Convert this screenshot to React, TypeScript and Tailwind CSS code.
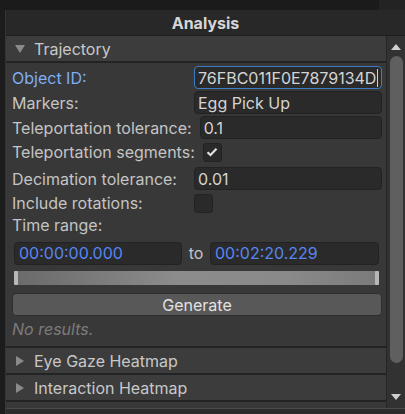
import { useState } from 'react'

const font = { fontFamily: 'Inter, "Noto Sans", sans-serif' }

function Foldout({ label, open }: { label: string; open?: boolean }) {
    return (
        <div className="h-[27px] flex items-center bg-[#3c3c3c] border-b-2 border-[#232323] shrink-0">
            <div className="w-[24px] flex justify-center pl-[3px]">
                {open ? (
                    <svg width="12" height="10" viewBox="0 0 12 10"><path d="M1 1 L11 1 L6 9 Z" fill="#8a8a8a" /></svg>
                ) : (
                    <svg width="10" height="12" viewBox="0 0 10 12"><path d="M1 1 L9 6 L1 11 Z" fill="#8a8a8a" /></svg>
                )}
            </div>
            <span className="text-[16px] text-[#c8c8c8] ml-[4px]">{label}</span>
        </div>
    )
}

function Field({ label, value, focused, mt }: { label: string; value: string; focused?: boolean; mt?: string }) {
    return (
        <div className={"flex items-center h-[23px] " + (mt ?? '')}>
            <div className={"min-w-[174px] text-[16px] whitespace-nowrap " + (focused ? 'text-[#7eaef5]' : 'text-[#c4c4c4]')}>{label}</div>
            <div className={"ml-[8px] flex-1 h-[23px] rounded-[4px] bg-[#2a2a2a] border flex items-center px-[3px] text-[16px] text-[#d4d4d4] whitespace-nowrap " + (focused ? 'border-[#3d7cc4] justify-end' : 'border-[#222222]')}>
                {value}
                {focused && <span className="w-[1px] h-[18px] bg-[#d4d4d4] ml-[1px] shrink-0" />}
            </div>
        </div>
    )
}

function Check({ label, checked, mt }: { label: string; checked?: boolean; mt?: string }) {
    return (
        <div className={"flex items-center h-[20px] " + (mt ?? '')}>
            <div className="min-w-[174px] text-[16px] text-[#c4c4c4] whitespace-nowrap">{label}</div>
            <div className="ml-[8px] w-[19px] h-[19px] rounded-[3px] bg-[#2a2a2a] border border-[#222222] flex items-center justify-center">
                {checked && (
                    <svg width="12" height="10" viewBox="0 0 12 10"><path d="M1.5 5.2 L4.5 8 L10.5 1.8" stroke="#e0e0e0" strokeWidth="2.2" fill="none" /></svg>
                )}
            </div>
        </div>
    )
}

export default function App() {
    const [objectId] = useState('76FBC011F0E7879134D')

    return (
        <div className="w-[405px] h-[414px] bg-[#1b1b1b] flex overflow-hidden" style={font}>
            {/* left dock edge */}
            <div className="w-[6px] bg-[#1c1c1c] border-r border-[#343434] mt-[10px]" />

            <div className="flex-1 flex flex-col min-w-0">
                {/* top strip */}
                <div className="h-[10px] flex shrink-0">
                    <div className="flex-1 bg-[#1b1b1b]" />
                    <div className="w-[26px] bg-[#232323]" />
                </div>

                {/* title */}
                <div className="h-[26px] bg-[#282828] border-b border-[#1e1e1e] flex items-center justify-center shrink-0">
                    <span className="text-[16px] font-bold text-[#d6d6d6]">Analysis</span>
                </div>

                <div className="flex flex-1 min-h-0">
                    {/* content */}
                    <div className="w-[380px] bg-[#383838] flex flex-col">
                        <Foldout label="Trajectory" open />

                        <div className="pl-[6px] pr-[4px] pt-[3px] flex flex-col">
                            <Field label="Object ID:" value={objectId} focused />
                            <Field label="Markers:" value="Egg Pick Up" mt="mt-[2px]" />
                            <Field label="Teleportation tolerance:" value="0.1" mt="mt-[2px]" />
                            <Check label="Teleportation segments:" checked mt="mt-[3px]" />
                            <Field label="Decimation tolerance:" value="0.01" mt="mt-[5px]" />
                            <Check label="Include rotations:" mt="mt-[3px]" />
                            <div className="text-[16px] text-[#c4c4c4] h-[20px] mt-[2px] leading-[20px]">Time range:</div>

                            <div className="flex items-center mt-[6px] pl-[2px] pr-[3px]">
                                <div className="w-[168px] h-[23px] rounded-[4px] bg-[#2a2a2a] border border-[#222222] flex items-center px-[4px] text-[16px] text-[#5686f2]">00:00:00.000</div>
                                <div className="flex-1 text-center text-[16px] text-[#c4c4c4]">to</div>
                                <div className="w-[169px] h-[23px] rounded-[4px] bg-[#2a2a2a] border border-[#222222] flex items-center px-[4px] text-[16px] text-[#5686f2]">00:02:20.229</div>
                            </div>

                            <div className="mt-[6px] ml-[2px] mr-[3px] h-[14px] rounded-[2px] flex bg-[linear-gradient(90deg,#6a6a6a_0%,#8c8c8c_45%,#8a8a8a_75%,#7a7a7a_100%)]">
                                <div className="w-[4px] bg-[#b8b8b8] rounded-[1px]" />
                                <div className="flex-1" />
                                <div className="w-[4px] bg-[#b8b8b8] rounded-[1px]" />
                            </div>

                            <button className="mt-[8px] h-[23px] rounded-[4px] bg-[#585858] border border-[#2e2e2e] text-[16px] text-[#e2e2e2] flex items-center justify-center">Generate</button>

                            <div className="text-[16px] italic text-[#7c7c7c] h-[20px] mt-[3px] leading-[20px]">No results.</div>
                        </div>

                        <div className="mt-[7px] border-t-2 border-[#232323]" />
                        <Foldout label="Eye Gaze Heatmap" />
                        <Foldout label="Interaction Heatmap" />
                        <div className="flex-1" />
                    </div>

                    {/* scrollbar */}
                    <div className="flex-1 bg-[#323232] border-l border-[#262626] flex flex-col items-center">
                        <div className="h-[20px] flex items-center justify-center">
                            <svg width="10" height="7" viewBox="0 0 10 7"><path d="M0 7 L5 1 L10 7 Z" fill="#cfcfcf" /></svg>
                        </div>
                        <div className="w-[13px] h-[307px] rounded-[7px] bg-[#5f5f5f]" />
                        <div className="flex-1" />
                        <div className="h-[14px] flex items-start justify-center">
                            <svg width="10" height="7" viewBox="0 0 10 7"><path d="M0 0 L10 0 L5 6 Z" fill="#cfcfcf" /></svg>
                        </div>
                    </div>
                </div>

                {/* bottom strip */}
                <div className="h-[6px] bg-[#2c2c2c] border-t border-[#4a4a4a] shrink-0" />
            </div>
        </div>
    )
}
